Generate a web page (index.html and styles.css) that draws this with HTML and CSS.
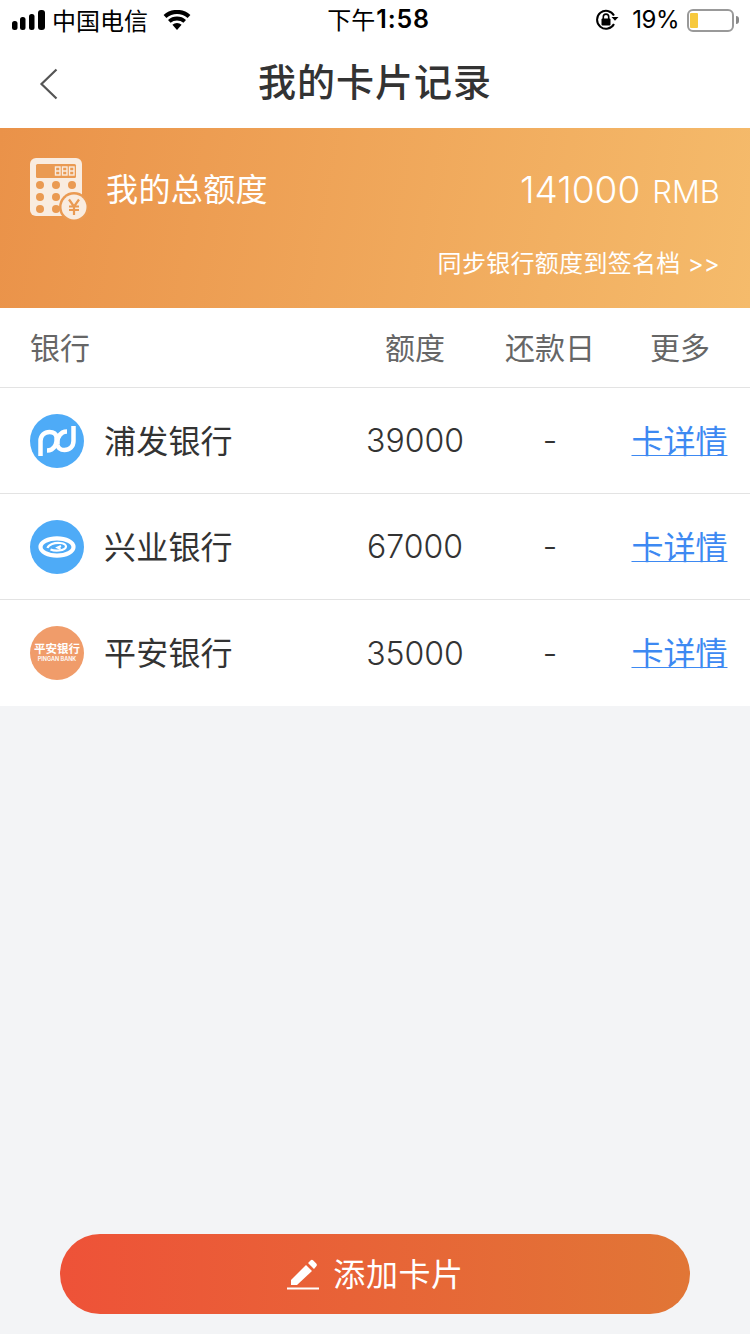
FILE: index.html
```html
<!DOCTYPE html>
<html lang="zh-CN">
<head>
<meta charset="utf-8">
<title>我的卡片记录</title>
<link rel="stylesheet" href="styles.css">
</head>
<body>
<div class="page">
  <div class="status">
    <div class="status-left">
      <svg class="signal" width="33" height="20" viewBox="0 0 33 20"><rect x="0" y="11" width="5.500" height="9" rx="2.500"/><rect x="8" y="7" width="5.500" height="13" rx="2.500"/><rect x="17" y="4" width="5.500" height="16" rx="2.500"/><rect x="26" y="0" width="7" height="20" rx="3"/></svg>
      <span class="carrier">中国电信</span>
      <svg class="wifi" width="28" height="20" viewBox="0 0 28 20"><path d="M14 20l-4.600-5.200a7 7 0 0 1 9.200 0z"/><path d="M7.600 12.800L5 9.900a13.400 13.400 0 0 1 18 0l-2.600 2.900a9.700 9.700 0 0 0-12.800 0z"/><path d="M3.400 8.100L.6 5A20 20 0 0 1 27.400 5l-2.800 3.100a15.800 15.800 0 0 0-21.200 0z"/></svg>
    </div>
    <div class="status-time"><span class="time-cn">下午</span><span class="time-num">1:58</span></div>
    <div class="status-right">
      <svg class="lock" width="24" height="22" viewBox="0 0 24 22"><path d="M19 6.500A9 9 0 1 0 19 15" fill="none" stroke="#000" stroke-width="2"/><path d="M16.500 8h7l-3.500 3.800z"/><rect x="6.500" y="9.500" width="9" height="7" rx="1"/><path d="M8.300 10V7.800a2.700 2.700 0 0 1 5.400 0V10" fill="none" stroke="#000" stroke-width="1.600"/></svg>
      <span class="pct">19%</span>
      <span class="battery"><span class="battery-fill"></span></span>
      <span class="battery-tip"></span>
    </div>
  </div>

  <header class="nav">
    <svg class="back" width="20" height="32" viewBox="0 0 20 32"><path d="M17.500 1.500L2.500 16l15 14.500" fill="none" stroke="#555" stroke-width="2.200"/></svg>
    <h1 class="title">我的卡片记录</h1>
  </header>

  <section class="banner">
    <div class="banner-top">
      <svg class="calc" width="60" height="64" viewBox="0 0 60 64">
        <rect x="2" y="2" width="52" height="58" rx="6" fill="#f9ece0"/>
        <rect x="8" y="8" width="40" height="14" rx="1.500" fill="#ea9a52"/>
        <g fill="#ea9a52"><circle cx="12" cy="29" r="4"/><circle cx="28" cy="29" r="4"/><circle cx="44" cy="29" r="4"/><circle cx="12" cy="41" r="4"/><circle cx="28" cy="41" r="4"/><circle cx="12" cy="53" r="4"/><circle cx="28" cy="53" r="4"/><circle cx="46" cy="51" r="15"/></g>
        <g fill="none" stroke="#f9ece0" stroke-width="1.400"><rect x="27.500" y="11" width="4.500" height="8"/><rect x="34.500" y="11" width="4.500" height="8"/><rect x="41.500" y="11" width="4.500" height="8"/><path d="M27.500 15H32M34.500 15H39M41.500 15H46"/></g>
        <circle cx="46" cy="51" r="12.500" fill="#f9ece0"/>
        <path d="M41 43.500l5 7 5-7M41 50.500h10M41 54h10M46 50.500V59" fill="none" stroke="#ea9a52" stroke-width="2.200"/>
      </svg>
      <span class="banner-label">我的总额度</span>
      <span class="banner-amount"><span class="amount-num">141000</span> <span class="amount-unit">RMB</span></span>
    </div>
    <div class="banner-sync">同步银行额度到签名档 &gt;&gt;</div>
  </section>

  <section class="table">
    <div class="row head">
      <span class="cell-bank">银行</span>
      <span class="cell">额度</span>
      <span class="cell">还款日</span>
      <span class="cell">更多</span>
    </div>
    <div class="row item">
      <span class="cell-bank">
        <svg class="logo" width="54" height="54" viewBox="0 0 54 54"><circle cx="27" cy="27" r="27" fill="#4eabf7"/><g fill="none" stroke="#fff" stroke-width="4.500"><path d="M10.500 42V27c0-5.500 4-9 9-9 4.500 0 6.500 2 7 5 .5 5-1 10-5 12.500-1.500.8-3 1-4.500 1"/><path d="M43.500 12v15c0 5.500-4 9-9 9-4.500 0-6.500-2-7-5-.5-5 1-10 5-12.500 1.500-.8 3-1 4.500-1"/></g></svg>
        <span class="bank-name">浦发银行</span>
      </span>
      <span class="cell num">39000</span>
      <span class="cell num">-</span>
      <a class="cell link" href="#">卡详情</a>
    </div>
    <div class="row item">
      <span class="cell-bank">
        <svg class="logo" width="54" height="54" viewBox="0 0 54 54"><circle cx="27" cy="27" r="27" fill="#4eabf7"/><g fill="none" stroke="#fff"><ellipse cx="27" cy="27" rx="16.500" ry="8.700" stroke-width="4.200"/><path d="M17.500 28c1-3.500 7-5.500 12.500-5 3.500.4 6 1.600 6 3.500 0 2-3 3.500-7 4-3 .3-6 0-8.500-1" stroke-width="2.200"/><path d="M31 26l-3.500 1.500 3 1.500" stroke-width="2"/></g></svg>
        <span class="bank-name">兴业银行</span>
      </span>
      <span class="cell num">67000</span>
      <span class="cell num">-</span>
      <a class="cell link" href="#">卡详情</a>
    </div>
    <div class="row item">
      <span class="cell-bank">
        <span class="logo pingan"><span class="pa-cn">平安银行</span><span class="pa-en">PINGAN BANK</span></span>
        <span class="bank-name">平安银行</span>
      </span>
      <span class="cell num">35000</span>
      <span class="cell num">-</span>
      <a class="cell link" href="#">卡详情</a>
    </div>
  </section>

  <div class="spacer"></div>

  <div class="footer">
    <button class="add" type="button">
      <svg width="34" height="32" viewBox="0 0 34 32"><path d="M5 22L20 7l6 6-15 14H5z" fill="#fff"/><path d="M22 5l2.500-2.500a2 2 0 0 1 2.800 0l3 3a2 2 0 0 1 0 2.800L28 11z" fill="#fff"/><rect x="1" y="29.500" width="32" height="2" fill="#fff"/></svg>
      <span class="add-text">添加卡片</span>
    </button>
  </div>
</div>
</body>
</html>
```
FILE: styles.css
```css
* { box-sizing: border-box; }
html, body { margin: 0; padding: 0; }
body {
  font-family: "Inter", "Noto Sans CJK SC", sans-serif;
  background: #f3f4f6;
  color: #333;
}
.page {
  width: 750px;
  height: 1334px;
  display: flex;
  flex-direction: column;
  overflow: hidden;
}
.status {
  height: 40px;
  background: #fff;
  color: #000;
  display: grid;
  grid-template-columns: 1fr auto 1fr;
  align-items: center;
  padding: 0 11px 0 12px;
  font-size: 26px;
}
.status-left { display: flex; align-items: center; }
.signal { margin-right: 7px; }
.carrier { font-family: "Noto Sans CJK SC", sans-serif; font-size: 24px; margin-bottom: 2px; }
.wifi { margin-left: 15px; }
.status-time { display: flex; align-items: center; margin-left: 6px; }
.time-cn { font-size: 24px; margin-bottom: 4px; }
.time-num { font-size: 25px; font-weight: 600; letter-spacing: .8px; margin: 0 0 2px 1px; }
.status-right { display: flex; align-items: center; justify-content: flex-end; }
.lock { margin-right: 13px; }
.pct { font-size: 24px; letter-spacing: -.5px; margin-right: 8px; margin-bottom: 1px; }
.battery {
  width: 47px;
  height: 23px;
  border: 2px solid #999;
  border-radius: 6px;
  padding: 2px 1px;
  display: flex;
}
.battery-fill { width: 8px; background: #f7c93e; border-radius: 1px; }
.battery-tip { width: 3px; height: 8px; background: #888; border-radius: 0 3px 3px 0; margin-left: 2px; }
.nav {
  height: 88px;
  background: #fff;
  position: relative;
  display: flex;
  align-items: center;
  justify-content: center;
}
.back { position: absolute; left: 39px; top: 28px; }
.title {
  margin: 0 0 9px;
  font-size: 38px;
  font-weight: 500;
  letter-spacing: 1px;
  color: #333;
}
.banner {
  height: 180px;
  background: linear-gradient(100deg, #ea9249 0%, #f5bb6b 100%);
  color: #fff;
  padding: 28px 30px 0 28px;
}
.banner-top { display: flex; align-items: center; height: 64px; }
.calc { flex: none; }
.banner-label { font-size: 32px; letter-spacing: .4px; margin-left: 18px; margin-top: -2px; }
.banner-amount { margin-left: auto; margin-top: 2px; display: flex; align-items: baseline; gap: 12px; }
.amount-num { font-size: 37px; font-weight: 300; }
.amount-unit { font-size: 31px; font-weight: 300; }
.banner-sync { margin-top: 27px; text-align: right; font-size: 24px; letter-spacing: .3px; line-height: 34px; }
.table { background: #fff; }
.row {
  display: grid;
  grid-template-columns: 320px 130px 140px 120px;
  padding: 0 10px 0 30px;
  align-items: center;
}
.head { height: 80px; font-size: 30px; color: #666; border-bottom: 1px solid #e3e3e3; padding-bottom: 4px; }
.item { height: 106px; border-bottom: 1px solid #e3e3e3; font-size: 32px; color: #333; }
.item:last-child { border-bottom: 0; }
.cell { text-align: center; }
.num { font-weight: 350; }
.cell-bank { display: flex; align-items: center; }
.logo { flex: none; }
.bank-name { margin: 0 0 4px 20px; letter-spacing: .2px; }
.link {
  color: #3d89f2;
  text-decoration: underline;
  text-underline-offset: 2px;
  text-decoration-thickness: 1px;
  margin: 0 1px 4px 0;
}
.pingan {
  width: 54px;
  height: 54px;
  border-radius: 50%;
  background: #f09c6a;
  color: #fff;
  display: flex;
  flex-direction: column;
  align-items: center;
  justify-content: center;
  overflow: hidden;
}
.pa-cn { font-size: 11.500px; line-height: 13px; font-weight: 700; white-space: nowrap; }
.pa-en { font-size: 5.500px; line-height: 7px; font-weight: 600; white-space: nowrap; }
.spacer { flex: 1; }
.footer { padding: 0 60px 20px; }
.add {
  width: 100%;
  height: 80px;
  border: 0;
  border-radius: 40px;
  background: linear-gradient(90deg, #ee5238 0%, #e17636 100%);
  color: #fff;
  font-family: inherit;
  font-size: 32px;
  letter-spacing: .6px;
  display: flex;
  align-items: center;
  justify-content: center;
  gap: 13px;
}
.add-text { margin-bottom: 4px; }
```
